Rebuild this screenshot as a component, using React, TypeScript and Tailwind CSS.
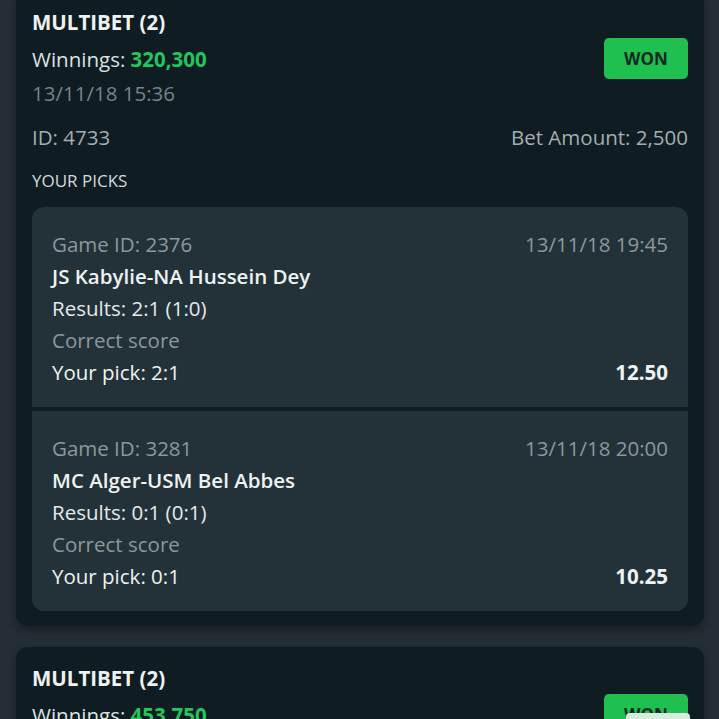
import React from "react";

type Pick = {
  gameId: number;
  date: string;
  match: string;
  result: string;
  market: string;
  pick: string;
  odds: string;
};

type Bet = {
  title: string;
  winnings: string;
  date: string;
  id: number;
  amount: string;
  picks: Pick[];
};

const bets: Bet[] = [
  {
    title: "MULTIBET (2)",
    winnings: "320,300",
    date: "13/11/18 15:36",
    id: 4733,
    amount: "2,500",
    picks: [
      { gameId: 2376, date: "13/11/18 19:45", match: "JS Kabylie-NA Hussein Dey", result: "2:1 (1:0)", market: "Correct score", pick: "2:1", odds: "12.50" },
      { gameId: 3281, date: "13/11/18 20:00", match: "MC Alger-USM Bel Abbes", result: "0:1 (0:1)", market: "Correct score", pick: "0:1", odds: "10.25" },
    ],
  },
  {
    title: "MULTIBET (2)",
    winnings: "453,750",
    date: "13/11/18 15:40",
    id: 4734,
    amount: "2,500",
    picks: [],
  },
];

const PickRow = ({ p }: { p: Pick }) => (
  <div className="px-5 pt-[21px] pb-[19px] text-[20.5px] leading-[32px]">
    <div className="flex justify-between text-[#8b989d]">
      <span>Game ID: {p.gameId}</span>
      <span>{p.date}</span>
    </div>
    <div className="font-semibold text-[#eef2f3]">{p.match}</div>
    <div className="text-[#e4eaec]">Results: {p.result}</div>
    <div className="text-[#8b989d]">{p.market}</div>
    <div className="flex justify-between text-[#eef2f3]">
      <span>Your pick: {p.pick}</span>
      <span className="font-bold">{p.odds}</span>
    </div>
  </div>
);

const BetCard = ({ bet }: { bet: Bet }) => (
  <div className="bg-[#0f1c21] rounded-[12px] px-4 pt-[17px] pb-[15px] shadow-[0_4px_8px_rgba(0,0,0,0.35)]">
    <div className="text-[20.5px] leading-[28px] font-bold text-[#eef2f3]">{bet.title}</div>
    <div className="flex items-center justify-between mt-[2px] h-[41px]">
      <div className="text-[20.5px] leading-[28px] text-[#dbe2e4]">
        Winnings: <span className="font-bold text-[#22c55e]">{bet.winnings}</span>
      </div>
      <div className="w-[84px] h-[41px] rounded-[5px] bg-[#1fbf50] flex items-center justify-center text-[17px] font-bold text-[#0f2a20]">
        WON
      </div>
    </div>
    <div className="text-[20.5px] leading-[28px] text-[#76838a]">{bet.date}</div>
    <div className="flex justify-between text-[20.5px] leading-[28px] text-[#a3aeb2] mt-4">
      <span>ID: {bet.id}</span>
      <span>Bet Amount: {bet.amount}</span>
    </div>
    <div className="text-[17px] leading-[24px] text-[#d3dadd] mt-[18px]">YOUR PICKS</div>
    {bet.picks.length > 0 && (
      <div className="mt-[14px] bg-[#233238] rounded-[12px] overflow-hidden">
        {bet.picks.map((p, i) => (
          <div key={p.gameId} className={i > 0 ? "border-t-4 border-[#0f1c21]" : ""}>
            <PickRow p={p} />
          </div>
        ))}
      </div>
    )}
  </div>
);

export default function App() {
  return (
    <div
      className="relative h-[719px] overflow-hidden bg-[#242e35] pl-4 pr-[15px]"
      style={{ fontFamily: '"Open Sans", "Noto Sans", sans-serif' }}
    >
      <div className="flex flex-col gap-[21px] -mt-[9px]">
        {bets.map((b, i) => (
          <BetCard key={i} bet={b} />
        ))}
      </div>
      <div className="absolute left-[626px] top-[713px] w-[64px] h-[10px] rounded-t-[4px] bg-[#d6ecdd]" />
    </div>
  );
}
